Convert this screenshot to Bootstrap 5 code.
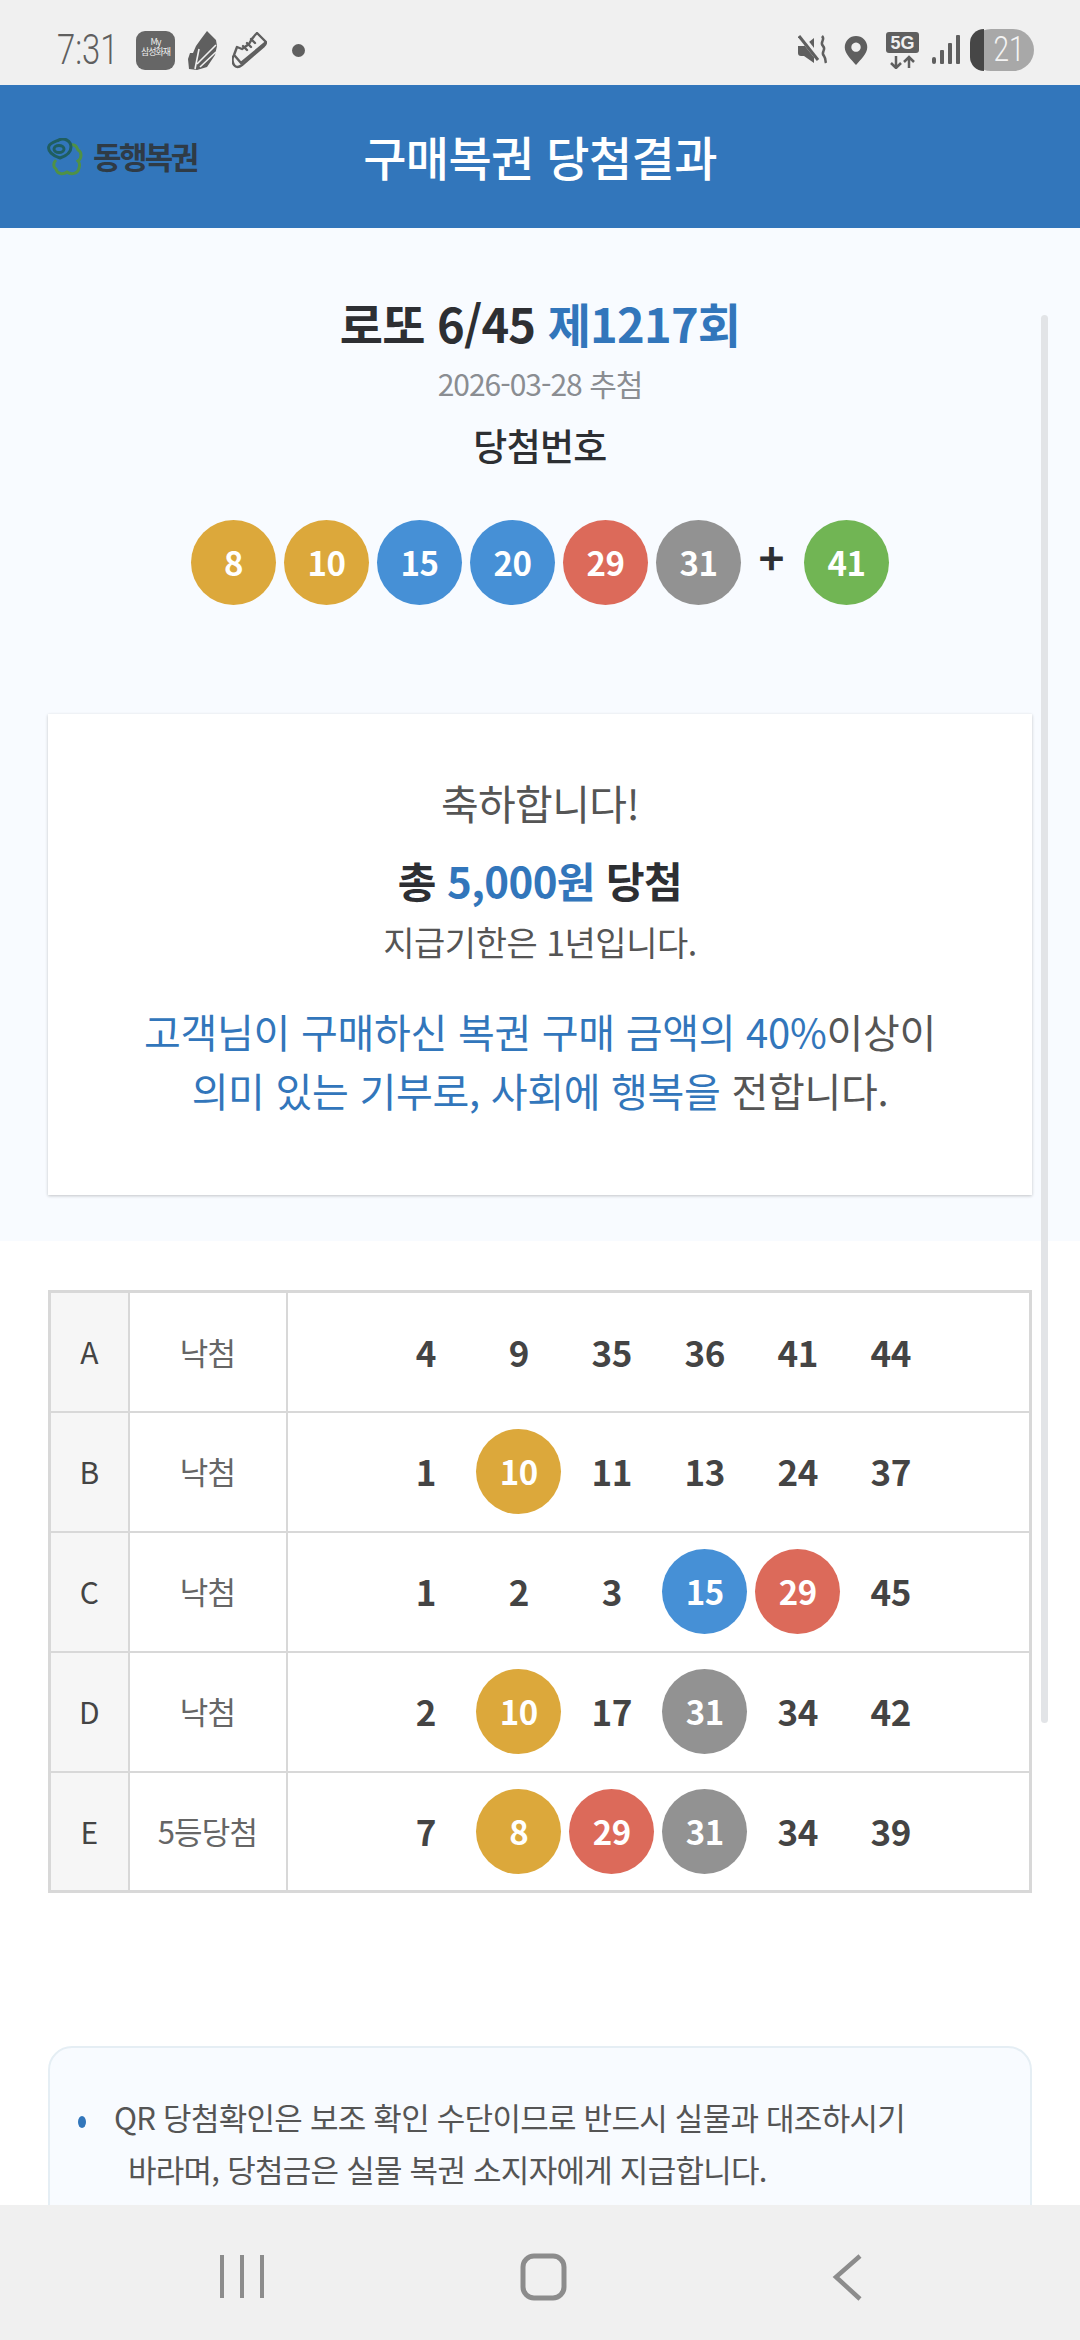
<!DOCTYPE html>
<html lang="ko">
<head>
  <meta charset="UTF-8">
  <title>구매복권 당첨결과</title>
  <link href="https://cdn.jsdelivr.net/npm/bootstrap@5.3.3/dist/css/bootstrap.min.css" rel="stylesheet">
  <script src="https://cdn.jsdelivr.net/npm/bootstrap@5.3.3/dist/js/bootstrap.bundle.min.js"></script>
  <style>
    html, body { margin: 0; background: #fff; }
    body { font-family: "Noto Sans CJK KR", "Noto Sans", sans-serif; color: #333; }
    .phone { width: 1080px; height: 2340px; position: relative; overflow: hidden; background: #fff; }
    .stat-bar { height: 85px; background: #f0f0f0; padding: 15px 46px 0 57px; color: #5f5f5f; }
    .stat-time { font-family: Roboto, sans-serif; font-weight: 300; font-size: 42px; line-height: 1; width: 79px; transform: scaleX(.78); transform-origin: left center; white-space: nowrap; }
    .stat-app { width: 39px; height: 39px; border-radius: 9px; background: #666; color: #eee; font-size: 9px; line-height: 10px; text-align: center; padding-top: 6px; letter-spacing: -1px; }
    .stat-dot { width: 13px; height: 13px; border-radius: 50%; background: #5f5f5f; }
    .batt { width: 64px; height: 42px; border-radius: 21px; background: #a8a8a8; color: #f4f4f4; font-family: Roboto, sans-serif; font-weight: 300; font-size: 35px; line-height: 42px; }
    .batt-left { width: 14px; height: 42px; background: #464646; border-radius: 21px 0 0 21px; }
    .batt-num { width: 50px; text-align: center; transform: scaleX(.8); }
    .top-head { height: 143px; background: #3276bb; padding-left: 47px; }
    .logo-wrap { width: 233px; }
    .logo-txt { font-size: 31px; font-weight: 700; color: #2f3b46; letter-spacing: -2.6px; margin-left: 8px; }
    .head-title { color: #fff; font-size: 47px; font-weight: 500; letter-spacing: -.6px; width: 520px; text-align: center; }
    .win-top { height: 1013px; background: #f8fbff; padding: 65px 48px 0; }
    .draw-title { font-size: 47px; font-weight: 700; line-height: 60px; letter-spacing: -.8px; color: #2d2f33; margin: 0; }
    .draw-no { color: #3276bb; }
    .draw-date { font-size: 30px; line-height: 40px; color: #8a8d92; letter-spacing: -1px; margin-top: 10px; }
    .draw-label { font-size: 37px; line-height: 50px; color: #2d2f33; margin-top: 17px; letter-spacing: -.7px; font-weight: 500; }
    .ball-row { margin-top: 50px; height: 85px; }
    .ball-slot { width: 93px; height: 85px; flex: none; }
    .ball { width: 85px; height: 85px; border-radius: 50%; color: #fff; font-weight: 700; font-size: 33px; letter-spacing: -.5px; flex: none; }
    .b-y { background: #dca83b; }
    .b-b { background: #4690d6; }
    .b-r { background: #dc6a5a; }
    .b-g { background: #929292; }
    .b-e { background: #71b554; }
    .plus-mark { width: 55px; padding-right: 10px; font-size: 44px; font-weight: 700; color: #2d2f33; line-height: 85px; text-align: center; flex: none; margin-top: -6px; }
    .congrats-box { margin-top: 109px; height: 481px; background: #fff; box-shadow: 0 1px 3px rgba(0,0,0,.22); padding-top: 58px; }
    .cg-hello { font-size: 41px; line-height: 60px; color: #555; letter-spacing: -.6px; }
    .cg-total { font-size: 42px; line-height: 60px; font-weight: 700; color: #2d2f33; margin-top: 18px; letter-spacing: -.6px; }
    .cg-total span, .cg-blue { color: #3276bb; }
    .cg-limit { font-size: 34px; line-height: 50px; color: #555; margin-top: 7px; letter-spacing: -.5px; }
    .cg-give { font-size: 40px; line-height: 59px; color: #555; margin-top: 35px; letter-spacing: -.3px; }
    .game-wrap { padding: 49px 48px 0; }
    .game-tbl { width: 984px; height: 601px; border: 3px solid #d8d8d8; border-collapse: collapse; table-layout: fixed; margin: 0; }
    .game-tbl td { border: 2px solid #d8d8d8; padding: 0; text-align: center; vertical-align: middle; height: 120px; }
    .g-key { width: 79px; background: #f6f6f6; font-size: 30px; color: #444; }
    .g-res { width: 158px; font-size: 31px; color: #666; letter-spacing: -.8px; }
    .g-num { width: 93px; height: 85px; flex: none; font-size: 35px; font-weight: 700; color: #444; letter-spacing: -.5px; }
    .notice-box { margin: 153px 48px 0; height: 300px; background: #f8fbff; border: 2px solid #e5eef4; border-radius: 24px; padding: 43px 0 0 28px; }
    .notice-item { font-size: 31px; line-height: 52px; color: #555; letter-spacing: -.75px; }
    .notice-item i { display: inline-block; width: 8px; height: 12px; border-radius: 50%; background: #3276bb; margin-right: 28px; vertical-align: middle; }
    .notice-sub { padding-left: 50px; }
    .scroll-thumb { position: absolute; left: 1041px; top: 315px; width: 7px; height: 1408px; background: #e2e4e7; border-radius: 4px; }
    .nav-bottom { position: absolute; left: 0; right: 0; top: 2205px; height: 135px; background: #f0f0f0; }
    .nav-bottom svg { position: absolute; top: 0; left: 0; }
  </style>
</head>
<body>
<div class="phone">

  <div class="stat-bar d-flex align-items-center">
    <div class="stat-time">7:31</div>
    <div class="stat-app">My<br>삼성화재</div>
    <svg style="margin-left:12px" width="31" height="39" viewBox="0 0 31 39"><path d="M20 0l9 9 1 6-2 9-8 12-10 3-8-1-1-10 2-6h3l3-7 5-7z" fill="#5f5f5f"/><path d="M13 36l16-15M10 33l19-19M8 38l4-20" stroke="#f0f0f0" stroke-width="1.6" fill="none"/></svg>
    <svg style="margin-left:14px" width="35" height="37" viewBox="0 0 35 37" fill="none" stroke="#5f5f5f" stroke-width="2.4" stroke-linejoin="round" stroke-linecap="round"><path d="M25 1l9 9q0 2-2 4L10 33q-5 4-8 0-3-5 0-10l3-8 5 2 7-5q3-6 8-11z"/><path d="M3 24l6 7 24-20M11 14l4 4M15 11l4 4M19 7l4 4"/></svg>
    <div class="stat-dot" style="margin-left:25px"></div>
    <div class="ms-auto d-flex align-items-center">
      <svg width="30" height="30" viewBox="0 0 30 30" fill="#5f5f5f"><path d="M0 11h6l10-8v25L6 21H3c-2 0-3-1-3-3z"/><path d="M2 0l19 24" stroke="#f0f0f0" stroke-width="6"/><path d="M1 1l19 24" stroke="#5f5f5f" stroke-width="3"/><path d="M24 1c4 4-3 6 1 10 4 4-3 6 1 10 2 3 1 5 2 7" fill="none" stroke="#5f5f5f" stroke-width="2.5"/></svg>
      <svg style="margin-left:15px" width="26" height="30" viewBox="0 0 26 32"><path fill-rule="evenodd" fill="#5f5f5f" d="M13 32C8 26 1 20 1 13a12 12 0 0 1 24 0c0 7-7 13-12 19zM13 8a5 5 0 1 0 .01 0z"/></svg>
      <svg style="margin-left:17px" width="34" height="37" viewBox="0 0 34 37"><rect width="33" height="21" rx="3" fill="#5f5f5f"/><text x="16.5" y="17" text-anchor="middle" font-family="Liberation Sans" font-weight="700" font-size="18" fill="#f0f0f0">5G</text><path d="M10 24v12M5 31l5 5 5-5M23 36V25M18 30l5-5 5 5" fill="none" stroke="#5f5f5f" stroke-width="2.5"/></svg>
      <svg style="margin-left:12px" width="28" height="30" viewBox="0 0 28 30" fill="#5f5f5f"><rect x="0" y="22" width="4" height="7" rx="2"/><rect x="8" y="15" width="4" height="14" rx="1"/><rect x="16" y="8" width="4" height="21" rx="1"/><rect x="24" y="0" width="4" height="29" rx="1"/></svg>
      <div class="batt d-flex" style="margin-left:10px"><div class="batt-left"></div><div class="batt-num">21</div></div>
    </div>
  </div>

  <header class="top-head d-flex align-items-center">
    <div class="logo-wrap d-flex align-items-center">
      <svg width="38" height="38" viewBox="0 0 38 38" fill="none" stroke-width="3"><path d="M9 22c-3 3-3 7 0 9 1 5 7 6 11 3 4 3 11 2 12-4 1-3 1-5-1-7 4-3 4-9 0-11-1-4-4-6-8-5" stroke="#4f9146"/><path d="M12 2c5-3 12 1 12 7 0 5-5 9-11 11C6 18 0 13 2 8c1-3 5-4 10-6z" stroke="#1f5e60"/><ellipse cx="12" cy="11" rx="5" ry="3.5" stroke="#1f5e60"/></svg>
      <div class="logo-txt text-nowrap">동행복권</div>
    </div>
    <div class="head-title text-nowrap">구매복권 당첨결과</div>
  </header>

  <section class="win-top">
    <h1 class="draw-title text-center">로또 6/45 <span class="draw-no">제1217회</span></h1>
    <div class="draw-date text-center">2026-03-28 추첨</div>
    <div class="draw-label text-center">당첨번호</div>
    <div class="ball-row d-flex justify-content-center">
      <div class="ball-slot"><div class="ball b-y d-flex align-items-center justify-content-center">8</div></div>
      <div class="ball-slot"><div class="ball b-y d-flex align-items-center justify-content-center">10</div></div>
      <div class="ball-slot"><div class="ball b-b d-flex align-items-center justify-content-center">15</div></div>
      <div class="ball-slot"><div class="ball b-b d-flex align-items-center justify-content-center">20</div></div>
      <div class="ball-slot"><div class="ball b-r d-flex align-items-center justify-content-center">29</div></div>
      <div class="ball-slot"><div class="ball b-g d-flex align-items-center justify-content-center">31</div></div>
      <div class="plus-mark">+</div>
      <div class="ball b-e d-flex align-items-center justify-content-center">41</div>
    </div>
    <div class="congrats-box text-center">
      <div class="cg-hello">축하합니다!</div>
      <div class="cg-total">총 <span>5,000원</span> 당첨</div>
      <div class="cg-limit">지급기한은 1년입니다.</div>
      <div class="cg-give"><span class="cg-blue">고객님이 구매하신 복권 구매 금액의 40%</span>이상이<br><span class="cg-blue">의미 있는 기부로, 사회에 행복을</span> 전합니다.</div>
    </div>
  </section>

  <div class="game-wrap">
    <table class="game-tbl">
      <tr>
        <td class="g-key">A</td><td class="g-res">낙첨</td>
        <td><div class="d-flex justify-content-center align-items-center">
          <div class="g-num d-flex align-items-center justify-content-center">4</div>
          <div class="g-num d-flex align-items-center justify-content-center">9</div>
          <div class="g-num d-flex align-items-center justify-content-center">35</div>
          <div class="g-num d-flex align-items-center justify-content-center">36</div>
          <div class="g-num d-flex align-items-center justify-content-center">41</div>
          <div class="g-num d-flex align-items-center justify-content-center">44</div>
        </div></td>
      </tr>
      <tr>
        <td class="g-key">B</td><td class="g-res">낙첨</td>
        <td><div class="d-flex justify-content-center align-items-center">
          <div class="g-num d-flex align-items-center justify-content-center">1</div>
          <div class="g-num d-flex align-items-center justify-content-center"><div class="ball b-y d-flex align-items-center justify-content-center">10</div></div>
          <div class="g-num d-flex align-items-center justify-content-center">11</div>
          <div class="g-num d-flex align-items-center justify-content-center">13</div>
          <div class="g-num d-flex align-items-center justify-content-center">24</div>
          <div class="g-num d-flex align-items-center justify-content-center">37</div>
        </div></td>
      </tr>
      <tr>
        <td class="g-key">C</td><td class="g-res">낙첨</td>
        <td><div class="d-flex justify-content-center align-items-center">
          <div class="g-num d-flex align-items-center justify-content-center">1</div>
          <div class="g-num d-flex align-items-center justify-content-center">2</div>
          <div class="g-num d-flex align-items-center justify-content-center">3</div>
          <div class="g-num d-flex align-items-center justify-content-center"><div class="ball b-b d-flex align-items-center justify-content-center">15</div></div>
          <div class="g-num d-flex align-items-center justify-content-center"><div class="ball b-r d-flex align-items-center justify-content-center">29</div></div>
          <div class="g-num d-flex align-items-center justify-content-center">45</div>
        </div></td>
      </tr>
      <tr>
        <td class="g-key">D</td><td class="g-res">낙첨</td>
        <td><div class="d-flex justify-content-center align-items-center">
          <div class="g-num d-flex align-items-center justify-content-center">2</div>
          <div class="g-num d-flex align-items-center justify-content-center"><div class="ball b-y d-flex align-items-center justify-content-center">10</div></div>
          <div class="g-num d-flex align-items-center justify-content-center">17</div>
          <div class="g-num d-flex align-items-center justify-content-center"><div class="ball b-g d-flex align-items-center justify-content-center">31</div></div>
          <div class="g-num d-flex align-items-center justify-content-center">34</div>
          <div class="g-num d-flex align-items-center justify-content-center">42</div>
        </div></td>
      </tr>
      <tr>
        <td class="g-key">E</td><td class="g-res">5등당첨</td>
        <td><div class="d-flex justify-content-center align-items-center">
          <div class="g-num d-flex align-items-center justify-content-center">7</div>
          <div class="g-num d-flex align-items-center justify-content-center"><div class="ball b-y d-flex align-items-center justify-content-center">8</div></div>
          <div class="g-num d-flex align-items-center justify-content-center"><div class="ball b-r d-flex align-items-center justify-content-center">29</div></div>
          <div class="g-num d-flex align-items-center justify-content-center"><div class="ball b-g d-flex align-items-center justify-content-center">31</div></div>
          <div class="g-num d-flex align-items-center justify-content-center">34</div>
          <div class="g-num d-flex align-items-center justify-content-center">39</div>
        </div></td>
      </tr>
    </table>
  </div>

  <div class="notice-box">
    <div class="notice-item text-nowrap"><i></i>QR 당첨확인은 보조 확인 수단이므로 반드시 실물과 대조하시기</div>
    <div class="notice-item notice-sub text-nowrap">바라며, 당첨금은 실물 복권 소지자에게 지급합니다.</div>
  </div>

  <div class="scroll-thumb"></div>

  <nav class="nav-bottom">
    <svg width="1080" height="135" fill="none" stroke="#8c8c8c" stroke-width="4">
      <path d="M222 50v43M242 50v43M262 50v43"/>
      <rect x="523" y="51" width="41" height="42" rx="11" stroke-width="5"/>
      <path d="M860 51l-24 21 24 22" stroke-width="4.5"/>
    </svg>
  </nav>

</div>
</body>
</html>
